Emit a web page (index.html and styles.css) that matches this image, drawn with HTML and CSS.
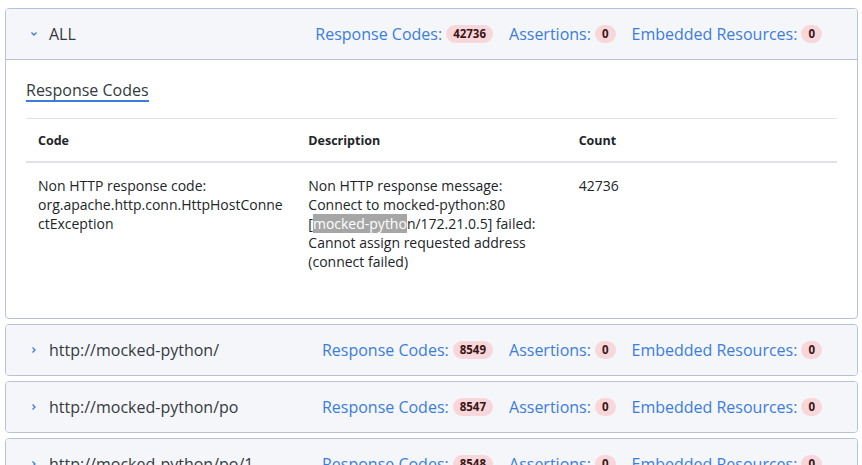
FILE: index.html
```html
<!DOCTYPE html>
<html>
<head>
<meta charset="utf-8">
<link rel="stylesheet" href="styles.css">
</head>
<body>
<div class="list">
  <div class="card">
    <div class="card-head open">
      <span class="chev"><svg width="8" height="8" viewBox="0 0 8 8"><path d="M1.5 2.5 L4 5 L6.5 2.5" fill="none" stroke="#3b7ddd" stroke-width="1.3"/></svg></span>
      <span class="title">ALL</span>
      <div class="stats">
        <span class="stat">Response Codes: <span class="badge">42736</span></span>
        <span class="stat">Assertions: <span class="badge">0</span></span>
        <span class="stat">Embedded Resources: <span class="badge">0</span></span>
      </div>
    </div>
    <div class="card-body">
      <div class="tabs"><span class="tab">Response Codes</span></div>
      <table class="codes">
        <thead>
          <tr><th>Code</th><th>Description</th><th>Count</th></tr>
        </thead>
        <tbody>
          <tr>
            <td>Non HTTP response code: org.apache.http.conn.HttpHostConnectException</td>
            <td>Non HTTP response message: Connect to mocked-python:80 [<span class="sel">mocked-pytho</span>n/172.21.0.5] failed: Cannot assign requested address (connect failed)</td>
            <td>42736</td>
          </tr>
        </tbody>
      </table>
    </div>
  </div>
  <div class="card">
    <div class="card-head">
      <span class="chev"><svg width="8" height="8" viewBox="0 0 8 8"><path d="M2.5 1.5 L5 4 L2.5 6.5" fill="none" stroke="#3b7ddd" stroke-width="1.3"/></svg></span>
      <span class="title">http://mocked-python/</span>
      <div class="stats">
        <span class="stat">Response Codes: <span class="badge">8549</span></span>
        <span class="stat">Assertions: <span class="badge">0</span></span>
        <span class="stat">Embedded Resources: <span class="badge">0</span></span>
      </div>
    </div>
  </div>
  <div class="card">
    <div class="card-head">
      <span class="chev"><svg width="8" height="8" viewBox="0 0 8 8"><path d="M2.5 1.5 L5 4 L2.5 6.5" fill="none" stroke="#3b7ddd" stroke-width="1.3"/></svg></span>
      <span class="title">http://mocked-python/po</span>
      <div class="stats">
        <span class="stat">Response Codes: <span class="badge">8547</span></span>
        <span class="stat">Assertions: <span class="badge">0</span></span>
        <span class="stat">Embedded Resources: <span class="badge">0</span></span>
      </div>
    </div>
  </div>
  <div class="card">
    <div class="card-head">
      <span class="chev"><svg width="8" height="8" viewBox="0 0 8 8"><path d="M2.5 1.5 L5 4 L2.5 6.5" fill="none" stroke="#3b7ddd" stroke-width="1.3"/></svg></span>
      <span class="title">http://mocked-python/po/1</span>
      <div class="stats">
        <span class="stat">Response Codes: <span class="badge">8548</span></span>
        <span class="stat">Assertions: <span class="badge">0</span></span>
        <span class="stat">Embedded Resources: <span class="badge">0</span></span>
      </div>
    </div>
  </div>
</div>
</body>
</html>
```

FILE: styles.css
```css
html, body {
  margin: 0;
  padding: 0;
  background: #ffffff;
  font-family: "Open Sans", "Noto Sans", sans-serif;
  color: #212529;
  overflow: hidden;
}
.list {
  display: flex;
  flex-direction: column;
  gap: 5px;
  padding: 8px 4px 0 5px;
}
.card {
  border: 1px solid #b7c2d8;
  border-radius: 4px;
  background: #fff;
  overflow: hidden;
  flex-shrink: 0;
}
.card-head {
  display: flex;
  align-items: center;
  height: 50px;
  padding: 0 35px 0 24px;
  background: #f5f6fa;
}
.card-head.open {
  border-bottom: 1px solid #b7c2d8;
}
.chev {
  width: 8px;
  height: 8px;
  display: flex;
  margin-right: 11px;
}
.title {
  font-size: 16px;
  color: #343a40;
  flex: 1;
}
.stats {
  display: flex;
  gap: 16px;
  align-items: center;
}
.stat {
  font-size: 16px;
  color: #3b7ddd;
  display: flex;
  align-items: center;
  gap: 4px;
}
.badge {
  display: inline-block;
  background: #f8d7da;
  color: #3a1417;
  font-size: 11.5px;
  font-weight: 700;
  line-height: 18px;
  padding: 0 7px;
  border-radius: 9px;
}
.card-body {
  padding: 20px 20px 34px 20px;
}
.tabs {
  border-bottom: 1px solid #dee2e6;
  display: flex;
}
.tab {
  font-size: 16px;
  color: #343a40;
  line-height: 20px;
  border-bottom: 2px solid #3b7ddd;
  margin-bottom: 16px;
}
.codes {
  width: 100%;
  table-layout: fixed;
  border-collapse: collapse;
}
.codes th {
  text-align: left;
  font-size: 12.5px;
  font-weight: 700;
  color: #212529;
  padding: 13px 12px 11px;
  border-bottom: 2px solid #dee2e6;
  line-height: 18px;
}
.codes td {
  vertical-align: top;
  font-size: 14px;
  line-height: 19px;
  padding: 13px 12px;
  overflow-wrap: anywhere;
  color: #212529;
}
.sel {
  background: #a6a6a6;
  color: #ffffff;
}
```
